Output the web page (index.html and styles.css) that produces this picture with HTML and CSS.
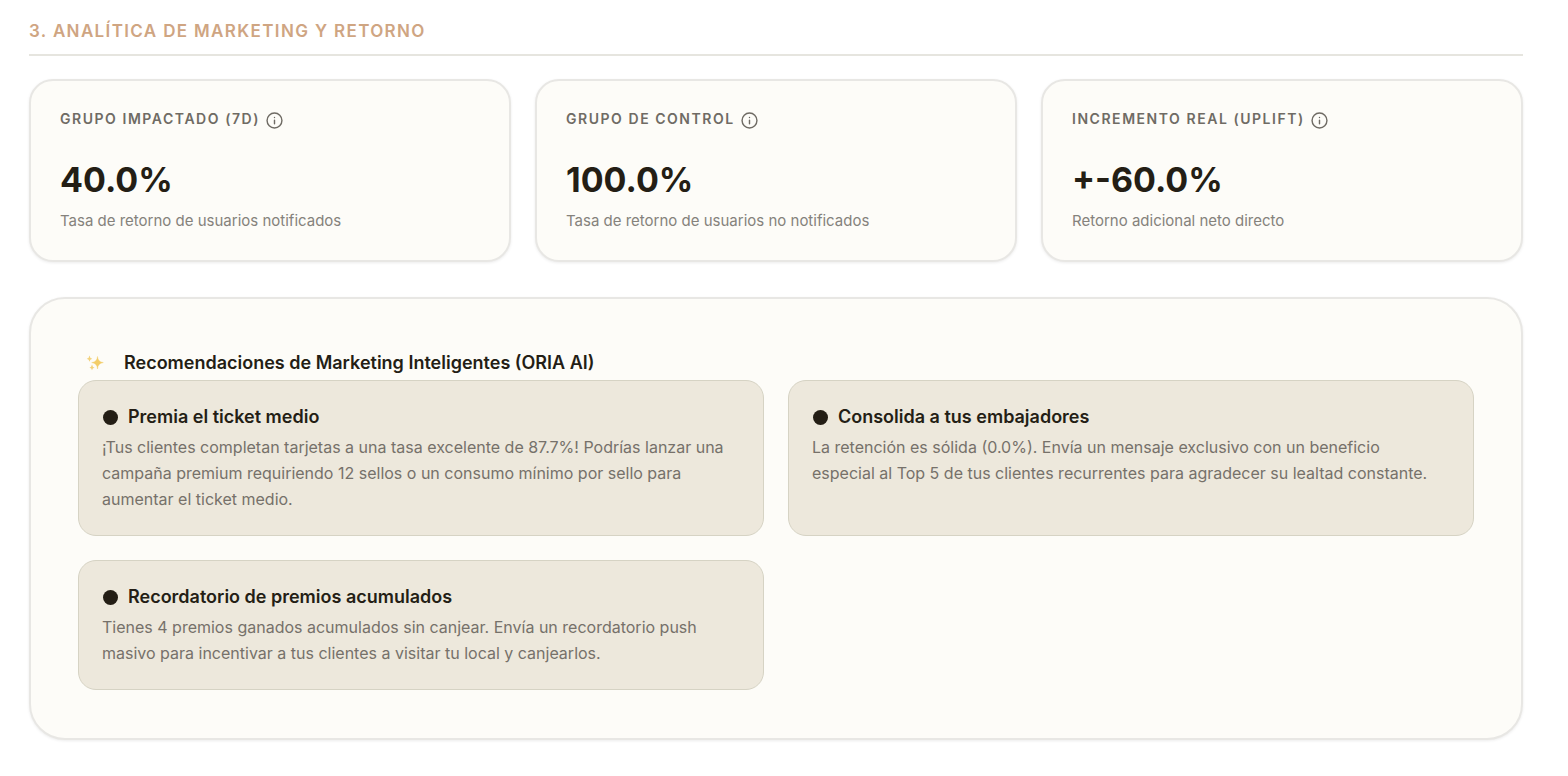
FILE: index.html
```html
<!DOCTYPE html>
<html lang="es">
<head>
  <meta charset="UTF-8">
  <meta name="viewport" content="width=device-width, initial-scale=1.0">
  <title>Analítica de Marketing y Retorno</title>
  <link rel="stylesheet" href="styles.css">
</head>
<body>
  <svg class="sprite" aria-hidden="true">
    <symbol id="info" viewBox="0 0 24 24">
      <g fill="none" stroke="currentColor" stroke-width="2" stroke-linecap="round">
        <circle cx="12" cy="12" r="10.5"/>
        <path d="M12 16.500v-5M12 7.800v.1"/>
      </g>
    </symbol>
  </svg>

  <main class="section">
    <h2 class="section-title">3. Analítica de Marketing y Retorno</h2>

    <div class="stats">
      <div class="stat-card">
        <h3 class="stat-label">Grupo impactado (7d) <svg class="info-icon"><use href="#info"/></svg></h3>
        <p class="stat-value">40.0%</p>
        <p class="stat-note">Tasa de retorno de usuarios notificados</p>
      </div>
      <div class="stat-card">
        <h3 class="stat-label">Grupo de control <svg class="info-icon"><use href="#info"/></svg></h3>
        <p class="stat-value">100.0%</p>
        <p class="stat-note">Tasa de retorno de usuarios no notificados</p>
      </div>
      <div class="stat-card">
        <h3 class="stat-label">Incremento real (uplift) <svg class="info-icon"><use href="#info"/></svg></h3>
        <p class="stat-value">+-60.0%</p>
        <p class="stat-note">Retorno adicional neto directo</p>
      </div>
    </div>

    <div class="panel">
      <h3 class="panel-title">
        <svg class="sparkles" viewBox="0 0 18 18" aria-hidden="true">
          <path fill="#f3cd68" d="M11.500 2.500Q11.900 7.900 17.300 8.600Q11.900 9.300 11.500 15Q11.100 9.300 5.700 8.600Q11.100 7.900 11.500 2.500Z" stroke="#f3cd68" stroke-width=".4"/>
          <path fill="#f3d27c" d="M3.500 1.600Q3.800 4.400 6.300 4.700Q3.800 5 3.500 7.800Q3.200 5 .7 4.700Q3.200 4.400 3.500 1.600Z"/>
          <path fill="#f3d27c" d="M6 10.500Q6.300 13.100 8.600 13.400Q6.300 13.700 6 16.300Q5.700 13.700 3.400 13.400Q5.700 13.100 6 10.500Z"/>
        </svg>
        Recomendaciones de Marketing Inteligentes (ORIA AI)
      </h3>
      <div class="tips">
        <div class="tip">
          <h4 class="tip-title">Premia el ticket medio</h4>
          <p class="tip-text">¡Tus clientes completan tarjetas a una tasa excelente de 87.7%! Podrías lanzar una campaña premium requiriendo 12 sellos o un consumo mínimo por sello para aumentar el ticket medio.</p>
        </div>
        <div class="tip">
          <h4 class="tip-title">Consolida a tus embajadores</h4>
          <p class="tip-text">La retención es sólida (0.0%). Envía un mensaje exclusivo con un beneficio especial al Top 5 de tus clientes recurrentes para agradecer su lealtad constante.</p>
        </div>
        <div class="tip">
          <h4 class="tip-title">Recordatorio de premios acumulados</h4>
          <p class="tip-text">Tienes 4 premios ganados acumulados sin canjear. Envía un recordatorio push masivo para incentivar a tus clientes a visitar tu local y canjearlos.</p>
        </div>
      </div>
    </div>
  </main>
</body>
</html>
```
FILE: styles.css
```css
* {
  box-sizing: border-box;
  margin: 0;
}
body {
  font-family: Inter, "Liberation Sans", sans-serif;
  background-color: #fff;
  color: #241e15;
}
.sprite {
  display: none;
}
.section {
  padding: 18px 45px 36px 29px;
}
.section-title {
  padding-bottom: 10px;
  margin-bottom: 23px;
  border-bottom: 2px solid #e6e5df;
  font-size: 17px;
  line-height: 26px;
  font-weight: 600;
  letter-spacing: 0.08em;
  text-transform: uppercase;
  color: #cfa582;
}
.stats {
  display: grid;
  grid-template-columns: repeat(3, 1fr);
  gap: 24px;
  margin-bottom: 35px;
}
.stat-card, .panel {
  background-color: #fdfcf8;
  border: 2px solid #e8e7e4;
  box-shadow: 0 1px 3px rgba(0, 0, 0, 0.08);
}
.stat-card {
  padding: 28px 29px;
  border-radius: 24px;
}
.stat-label {
  display: flex;
  align-items: flex-end;
  gap: 6px;
  margin-bottom: 29px;
  font-size: 14px;
  line-height: 20px;
  font-weight: 600;
  letter-spacing: 0.11em;
  text-transform: uppercase;
  color: #6f6b64;
}
.info-icon {
  width: 17px;
  height: 17px;
}
.stat-value {
  margin-bottom: 8px;
  font-size: 34px;
  line-height: 44px;
  font-weight: 700;
}
.stat-note {
  font-size: 15px;
  line-height: 22px;
  color: #85827c;
}
.panel {
  padding: 51px 47px 48px;
  border-radius: 36px;
}
.panel-title {
  display: flex;
  align-items: center;
  gap: 20px;
  padding-left: 8px;
  margin-bottom: 4px;
  font-size: 18px;
  line-height: 26px;
  font-weight: 600;
}
.sparkles {
  width: 18px;
  height: 18px;
}
.tips {
  display: grid;
  grid-template-columns: repeat(2, 1fr);
  gap: 24px;
}
.tip {
  padding: 23px 32px 23px 23px;
  background-color: #ede8dc;
  border: 1px solid #d6d3c4;
  border-radius: 18px;
}
.tip-title {
  display: flex;
  align-items: center;
  gap: 10px;
  margin-bottom: 4px;
  font-size: 18px;
  line-height: 26px;
  font-weight: 600;
}
.tip-title::before {
  content: "";
  width: 15px;
  height: 15px;
  margin-left: 1px;
  border-radius: 50%;
  background-color: #241e15;
}
.tip-text {
  font-size: 16px;
  line-height: 26px;
  color: #76716a;
}
```
